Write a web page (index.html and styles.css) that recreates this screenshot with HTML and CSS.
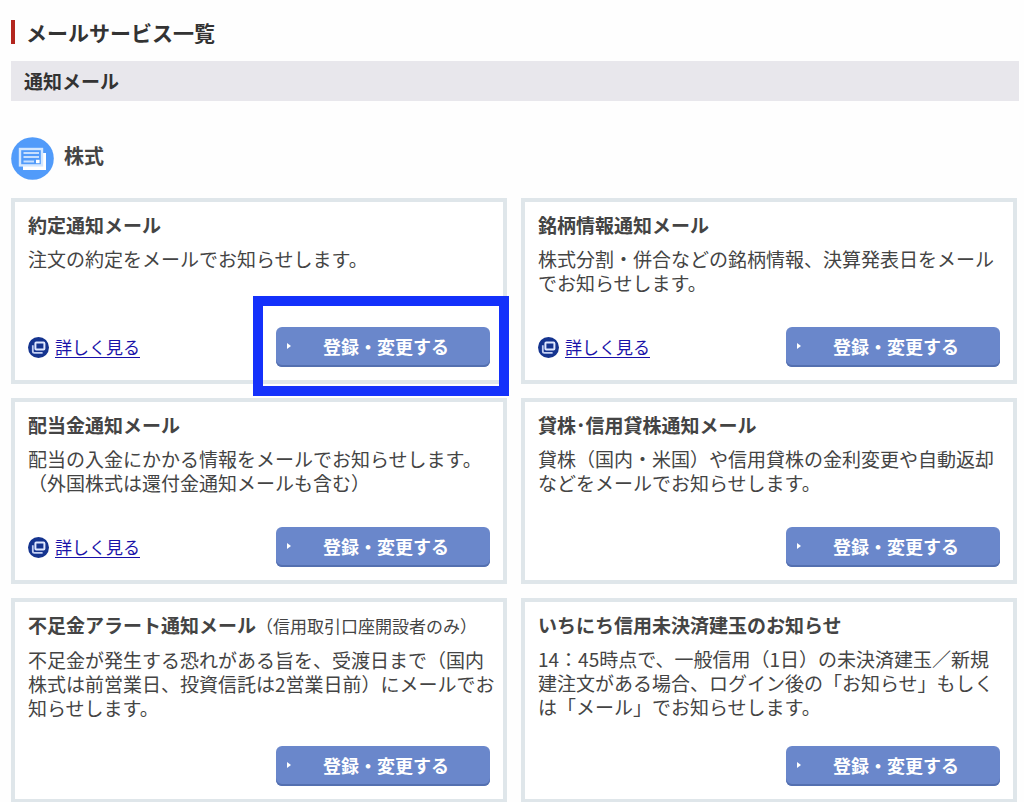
FILE: index.html
```html
<!DOCTYPE html>
<html lang="ja">
<head>
<meta charset="utf-8">
<meta name="viewport" content="width=device-width, initial-scale=1">
<title>メールサービス一覧</title>
<link rel="stylesheet" href="styles.css">
</head>
<body>
<svg class="sprite" aria-hidden="true">
  <symbol id="icon-window" viewBox="0 0 21 21">
    <circle cx="10.5" cy="10.5" r="10.5" fill="#15348f"/>
    <path d="M4.8 8.2V14.2Q4.8 15.8 6.4 15.8H14.6" fill="none" stroke="#c3d0f4" stroke-width="1.8"/>
    <rect x="7.4" y="5.6" width="9" height="7" rx="0.8" fill="#15348f" stroke="#dfe7ff" stroke-width="2"/>
  </symbol>
</svg>
<main class="page">
  <h1 class="page-title">メールサービス一覧</h1>
  <h2 class="section-bar">通知メール</h2>
  <div class="category">
    <svg class="category-icon" viewBox="0 0 43 43" aria-hidden="true">
      <circle cx="21.5" cy="21.5" r="21.3" fill="#519bfa"/>
      <path d="M12 29V33H35V16H32V29Z" fill="#fff"/>
      <rect x="9" y="12" width="22" height="16.4" fill="#519bfa" stroke="#d3e7ff" stroke-width="2.4"/>
      <path d="M12.5 16H28M12.5 20H28M12.5 24.5H23" stroke="#c6dffe" stroke-width="2.2"/>
      <rect x="25" y="22.8" width="3.6" height="3.4" fill="#fff"/>
    </svg>
    <h3 class="category-title">株式</h3>
  </div>

  <div class="cards">
    <section class="card">
      <h4 class="card-title">約定通知メール</h4>
      <p class="card-text">注文の約定をメールでお知らせします。</p>
      <div class="card-foot">
        <a class="more" href="#"><svg class="more-icon" aria-hidden="true"><use href="#icon-window"/></svg><span class="more-label">詳しく見る</span></a>
        <div class="action marked"><button class="btn" type="button">登録・変更する</button></div>
      </div>
    </section>
    <section class="card">
      <h4 class="card-title">銘柄情報通知メール</h4>
      <p class="card-text">株式分割・併合などの銘柄情報、決算発表日をメールでお知らせします。</p>
      <div class="card-foot">
        <a class="more" href="#"><svg class="more-icon" aria-hidden="true"><use href="#icon-window"/></svg><span class="more-label">詳しく見る</span></a>
        <div class="action"><button class="btn" type="button">登録・変更する</button></div>
      </div>
    </section>
    <section class="card">
      <h4 class="card-title">配当金通知メール</h4>
      <p class="card-text">配当の入金にかかる情報をメールでお知らせします。（外国株式は還付金通知メールも含む）</p>
      <div class="card-foot">
        <a class="more" href="#"><svg class="more-icon" aria-hidden="true"><use href="#icon-window"/></svg><span class="more-label">詳しく見る</span></a>
        <div class="action"><button class="btn" type="button">登録・変更する</button></div>
      </div>
    </section>
    <section class="card">
      <h4 class="card-title">貸株･信用貸株通知メール</h4>
      <p class="card-text">貸株（国内・米国）や信用貸株の金利変更や自動返却などをメールでお知らせします。</p>
      <div class="card-foot">
        <div class="action"><button class="btn" type="button">登録・変更する</button></div>
      </div>
    </section>
    <section class="card">
      <h4 class="card-title">不足金アラート通知メール<span class="card-note">（信用取引口座開設者のみ）</span></h4>
      <p class="card-text">不足金が発生する恐れがある旨を、受渡日まで（国内株式は前営業日、投資信託は2営業日前）にメールでお知らせします。</p>
      <div class="card-foot">
        <div class="action"><button class="btn" type="button">登録・変更する</button></div>
      </div>
    </section>
    <section class="card">
      <h4 class="card-title">いちにち信用未決済建玉のお知らせ</h4>
      <p class="card-text">14：45時点で、一般信用（1日）の未決済建玉／新規建注文がある場合、ログイン後の「お知らせ」もしくは「メール」でお知らせします。</p>
      <div class="card-foot">
        <div class="action"><button class="btn" type="button">登録・変更する</button></div>
      </div>
    </section>
  </div>
</main>
</body>
</html>
```
FILE: styles.css
```css
* {
  box-sizing: border-box;
}

body {
  margin: 0;
  background: #fefefe;
  color: #444;
  font-family: "Noto Sans CJK JP", sans-serif;
  font-size: 19px;
  line-height: 24px;
}

h1, h2, h3, h4, p {
  margin: 0;
}

.sprite {
  display: none;
}

.page {
  padding: 20px 5px 0 11px;
}

.page-title {
  padding-left: 11px;
  border-left: 4px solid #b3261e;
  color: #333;
  font-size: 21px;
  line-height: 24px;
}

.section-bar {
  margin-top: 17px;
  padding: 8px 13px;
  background: #e8e7ec;
  color: #333;
  font-size: 19px;
}

.category {
  display: flex;
  align-items: center;
  gap: 10px;
  margin: 36px 0 18px;
}

.category-icon {
  width: 43px;
  height: 43px;
}

.category-title {
  padding-bottom: 5px;
  font-size: 20px;
}

.cards {
  display: grid;
  grid-template-columns: 1fr 1fr;
  gap: 14px;
  padding-right: 2px;
}

.card {
  display: flex;
  flex-direction: column;
  padding: 11px 6px 13px 13px;
  border: 4px solid #dfe6ea;
  background: #fff;
}

.card-title {
  font-size: 19px;
}

.card-note {
  font-size: 17px;
  font-weight: 400;
}

.card-text {
  min-height: 54px;
  margin: 10px 0 26px;
}

.card-foot {
  display: flex;
  align-items: center;
  margin-top: auto;
  padding-right: 7px;
}

.more {
  display: flex;
  align-items: center;
  gap: 6px;
  color: #1a12a8;
  font-size: 17px;
  text-decoration: none;
}

.more-icon {
  width: 21px;
  height: 21px;
}

.more-label {
  text-decoration: underline;
  text-decoration-thickness: 1px;
  text-underline-offset: 3px;
}

.action {
  position: relative;
  margin-left: auto;
}

.marked::after {
  content: "";
  position: absolute;
  z-index: 1;
  inset: -31px -19px -29px -23px;
  border: 10px solid #1431fb;
  pointer-events: none;
}

.btn {
  display: flex;
  align-items: center;
  width: 214px;
  height: 40px;
  padding: 0 0 2px 11px;
  border: 0;
  border-radius: 6px;
  background: #6a87cb;
  box-shadow: inset 0 -2px 0 #5470b0;
  color: #fff;
  font-family: inherit;
  font-size: 18px;
  font-weight: 700;
  line-height: 24px;
  cursor: pointer;
}

.btn::before {
  content: "";
  margin-right: 32px;
  border: 3px solid transparent;
  border-right-width: 0;
  border-left: 4px solid #fff;
}
```
